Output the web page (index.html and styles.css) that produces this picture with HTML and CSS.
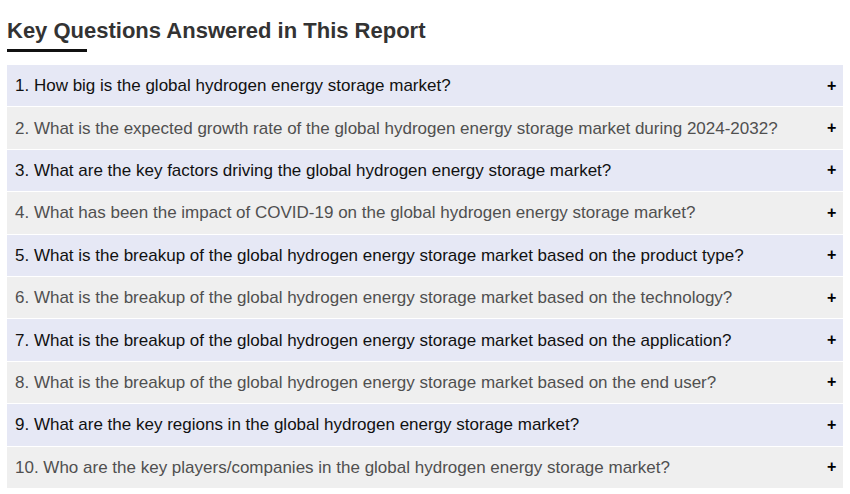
FILE: index.html
```html
<!DOCTYPE html>
<html>
<head>
<meta charset="utf-8">
<link rel="stylesheet" href="styles.css">
</head>
<body>
<section class="faq">
  <h2 class="faq-title">Key Questions Answered in This Report</h2>
  <div class="faq-rule"></div>
  <ul class="faq-list">
    <li class="faq-item odd"><span class="q">1. How big is the global hydrogen energy storage market?</span><span class="plus">+</span></li>
    <li class="faq-item even"><span class="q">2. What is the expected growth rate of the global hydrogen energy storage market during 2024-2032?</span><span class="plus">+</span></li>
    <li class="faq-item odd"><span class="q">3. What are the key factors driving the global hydrogen energy storage market?</span><span class="plus">+</span></li>
    <li class="faq-item even"><span class="q">4. What has been the impact of COVID-19 on the global hydrogen energy storage market?</span><span class="plus">+</span></li>
    <li class="faq-item odd"><span class="q">5. What is the breakup of the global hydrogen energy storage market based on the product type?</span><span class="plus">+</span></li>
    <li class="faq-item even"><span class="q">6. What is the breakup of the global hydrogen energy storage market based on the technology?</span><span class="plus">+</span></li>
    <li class="faq-item odd"><span class="q">7. What is the breakup of the global hydrogen energy storage market based on the application?</span><span class="plus">+</span></li>
    <li class="faq-item even"><span class="q">8. What is the breakup of the global hydrogen energy storage market based on the end user?</span><span class="plus">+</span></li>
    <li class="faq-item odd"><span class="q">9. What are the key regions in the global hydrogen energy storage market?</span><span class="plus">+</span></li>
    <li class="faq-item even"><span class="q">10. Who are the key players/companies in the global hydrogen energy storage market?</span><span class="plus">+</span></li>
  </ul>
</section>
</body>
</html>
```
FILE: styles.css
```css
html, body {
  margin: 0;
  padding: 0;
  background: #ffffff;
}
body {
  font-family: "Liberation Sans", Arial, sans-serif;
}
.faq {
  padding: 0 7px;
}
.faq-title {
  margin: 0;
  padding-top: 18px;
  font-size: 22px;
  line-height: 26px;
  font-weight: bold;
  color: #333333;
}
.faq-rule {
  width: 80px;
  height: 3px;
  background: #111111;
  margin-top: 5px;
}
.faq-list {
  list-style: none;
  margin: 13px 0 0 0;
  padding: 0;
}
.faq-item {
  display: flex;
  align-items: center;
  justify-content: space-between;
  height: 41.4px;
  box-sizing: border-box;
  padding: 0 8px 0 8px;
  margin-bottom: 1px;
  font-size: 17px;
}
.faq-item.odd {
  background: #e6e8f5;
  color: #111111;
}
.faq-item.even {
  background: #efefef;
  color: #505050;
}
.q {
  padding-top: 1px;
}
.plus {
  font-weight: bold;
  color: #000000;
  font-size: 16px;
  width: 8px;
  text-align: center;
}
```
